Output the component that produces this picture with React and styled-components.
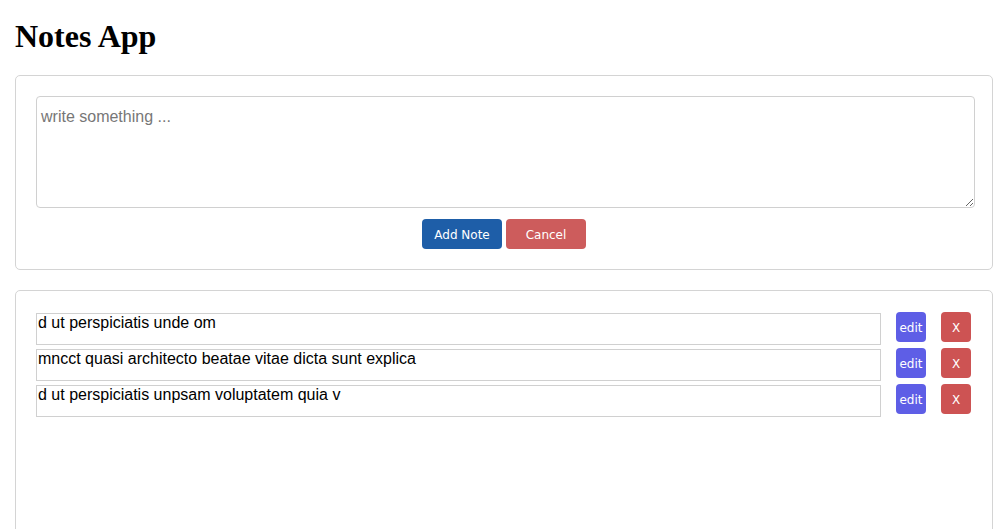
import React, { useState } from "react";
import styled, { createGlobalStyle } from "styled-components";

const GlobalStyle = createGlobalStyle`
  body {
    margin: 0;
    background: #fff;
    font-family: "Liberation Serif", serif;
  }
`;

const Page = styled.div`
  padding: 0 12px 0 15px;
`;

const Title = styled.h1`
  font-family: "Liberation Serif", serif;
  font-size: 32px;
  font-weight: bold;
  margin: 18px 0 20px;
  color: #000;
`;

const Card = styled.div`
  border: 1px solid #d4d4d4;
  border-radius: 5px;
  padding: ${props => props.pad || "20px 17px 20px 20px"};
  min-height: ${props => props.minHeight || "auto"};
  margin-bottom: 20px;
`;

const NoteInput = styled.textarea`
  display: block;
  box-sizing: border-box;
  width: 100%;
  height: 112px;
  border: 1px solid #d0d0d0;
  border-radius: 4px;
  padding: 11px 4px 9px;
  font-family: "Liberation Sans", Arial, sans-serif;
  font-size: 16px;
  outline: none;
  &::placeholder {
    color: #777;
  }
`;

const Actions = styled.div`
  display: flex;
  justify-content: center;
  gap: 4px;
  margin-top: 11px;
  padding-right: 3px;
`;

const Button = styled.button`
  width: ${props => props.w || "80px"};
  height: 30px;
  border: none;
  border-radius: 4px;
  background: ${props => props.bg};
  color: #fff;
  font-family: "DejaVu Sans", Verdana, sans-serif;
  font-size: 12px;
  padding: 1px 0 0;
  cursor: pointer;
`;

const List = styled.div`
  display: flex;
  flex-direction: column;
  gap: 3px;
`;

const Row = styled.div`
  display: flex;
  align-items: flex-start;
`;

const NoteText = styled.div`
  flex: 1;
  box-sizing: border-box;
  height: 32px;
  margin-top: 1px;
  border: 1px solid #d0d0d0;
  padding: 0 1px;
  font-family: "Liberation Sans", Arial, sans-serif;
  font-size: 16px;
  line-height: 18px;
  color: #000;
  overflow: hidden;
  white-space: nowrap;
`;

const RowButtons = styled.div`
  display: flex;
  gap: 15px;
  margin-left: 15px;
`;

const initialNotes = [
  "d ut perspiciatis unde om",
  "mncct quasi architecto beatae vitae dicta sunt explica",
  "d ut perspiciatis unpsam voluptatem quia v",
];

const App = () => {
  const [notes, setNotes] = useState(initialNotes);
  const [text, setText] = useState("");

  const addNote = () => {
    if (!text.trim()) return;
    setNotes([...notes, text]);
    setText("");
  };

  return (
    <Page>
      <GlobalStyle />
      <Title>Notes App</Title>
      <Card>
        <NoteInput
          placeholder="write something ..."
          value={text}
          onChange={e => setText(e.target.value)}
        />
        <Actions>
          <Button bg="#1e5ea8" onClick={addNote}>Add Note</Button>
          <Button bg="#cd5c5c" onClick={() => setText("")}>Cancel</Button>
        </Actions>
      </Card>
      <Card pad="21px 21px 20px 20px" minHeight="300px">
        <List>
          {notes.map((note, i) => (
            <Row key={i}>
              <NoteText>{note}</NoteText>
              <RowButtons>
                <Button w="30px" bg="#5e5ee6">edit</Button>
                <Button
                  w="30px"
                  bg="#cd5353"
                  onClick={() => setNotes(notes.filter((_, j) => j !== i))}
                >
                  X
                </Button>
              </RowButtons>
            </Row>
          ))}
        </List>
      </Card>
    </Page>
  );
};

export default App;
